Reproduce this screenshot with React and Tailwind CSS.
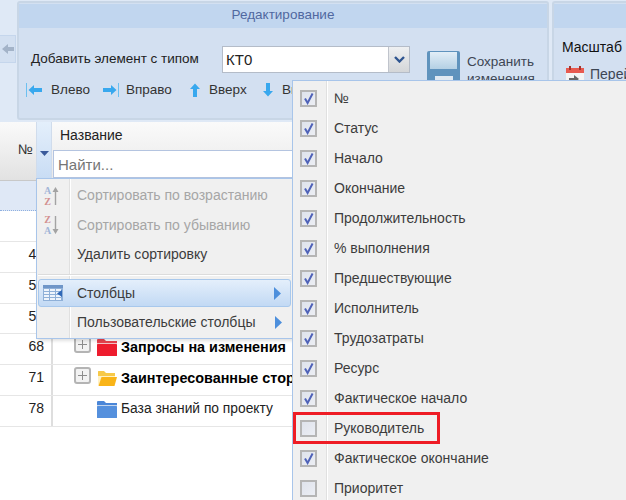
import React from 'react';

const rows = [
    { num: '1', selected: true, h: 'h-[30px]' },
    { num: '2', h: 'h-[31px]' },
    { num: '43', h: 'h-[31px]' },
    { num: '52', h: 'h-[31px]' },
    { num: '59', h: 'h-[30px]' },
    { num: '68', h: 'h-[31px]', title: 'Запросы на изменения', bold: true, folder: 'red', plus: true },
    { num: '71', h: 'h-[31px]', title: 'Заинтересованные стороны', bold: true, folder: 'yellow', plus: true },
    { num: '78', h: 'h-[31px]', title: 'База знаний по проекту', folder: 'blue' },
];

const columns = [
    ['№', true],
    ['Статус', true],
    ['Начало', true],
    ['Окончание', true],
    ['Продолжительность', true],
    ['% выполнения', true],
    ['Предшествующие', true],
    ['Исполнитель', true],
    ['Трудозатраты', true],
    ['Ресурс', true],
    ['Фактическое начало', true],
    ['Руководитель', false],
    ['Фактическое окончание', true],
    ['Приоритет', false],
];

const Folder = ({ type }) => {
    if (type === 'yellow') {
        return (
            <svg width="20" height="17" viewBox="0 0 20 17" className="shrink-0">
                <path d="M1 3 L1 1.5 Q1 1 1.5 1 L7 1 L9 3 L18 3 L18 6 L3 6 L1 12 Z" fill="#f7c948" />
                <path d="M1 6 L18 6 L18 7 L5 7 L2 15 L1 15 Z" fill="#fff1c4" />
                <path d="M4.5 7 L20 7 L17.5 16 L1.5 16 Z" fill="#f9b418" />
            </svg>
        );
    }
    const c = type === 'red' ? '#ee1c2e' : '#5590dd';
    const top = type === 'red' ? '#e8424e' : '#4a86d8';
    return (
        <svg width="20" height="17" viewBox="0 0 20 17" className="shrink-0">
            <path d="M0 3 L0 1 Q0 0 1 0 L7 0 L9 2 L20 2 L20 5 L0 5 Z" fill={top} />
            <rect x="0" y="4" width="20" height="1" fill="#f7f7f7" opacity="0.7" />
            <rect x="0" y="5" width="20" height="12" rx="0.5" fill={c} />
        </svg>
    );
};

const PlusBox = () => (
    <div className="w-[17px] h-[17px] shrink-0 rounded-[3px] border-2 border-[#b4b4b4] bg-[#f2f2f2] flex items-center justify-center">
        <svg width="11" height="11" viewBox="0 0 11 11">
            <path d="M5.5 1 V10 M1 5.5 H10" stroke="#8c8c8c" strokeWidth="1" />
        </svg>
    </div>
);

const Check = ({ checked }) => (
    <div className="w-[17px] h-[17px] shrink-0 border-2 border-[#b5b5b5] bg-gradient-to-br from-[#dfe3ec] to-[#eceef4] flex items-center justify-center">
        {checked && (
            <svg width="13" height="13" viewBox="0 0 13 13">
                <path d="M3 6.5 L5.6 11 L10.6 1.5" fill="none" stroke="#4f62b8" strokeWidth="2" />
            </svg>
        )}
    </div>
);

const Arrow = ({ dir, bar }) => {
    const rot = { left: 0, right: 180, up: 90, down: 270 }[dir];
    return (
        <svg width="18" height="18" viewBox="0 0 18 18" className="shrink-0">
            <g transform={`rotate(${rot} 9 9)`}>
                <path d="M2.5 9 L8 4 V7 H16 V11 H8 V14 Z" fill="#38a8ee" />
            </g>
            {bar === 'left' && <rect x="0" y="2" width="1" height="14" fill="#6cc0f0" />}
            {bar === 'right' && <rect x="17" y="2" width="1" height="14" fill="#6cc0f0" />}
        </svg>
    );
};

const SortIcon = ({ top, bottom, up }) => (
    <div className="w-[20px] h-[22px] flex items-center gap-[1px] opacity-60">
        <div className="flex flex-col items-center text-[10px] leading-[11px] font-bold font-['Liberation_Serif',serif]">
            <span className={top === 'A' ? 'text-[#6f8fc8]' : 'text-[#c05050]'}>{top}</span>
            <span className={bottom === 'A' ? 'text-[#6f8fc8]' : 'text-[#c05050]'}>{bottom}</span>
        </div>
        <svg width="7" height="20" viewBox="0 0 7 20">
            <g transform={up ? '' : 'rotate(180 3.5 10)'}>
                <path d="M3.5 1 L6.5 6 H4.2 V19 H2.8 V6 H0.5 Z" fill="#707070" />
            </g>
        </svg>
    </div>
);

const ColumnsIcon = () => (
    <svg width="20" height="16" viewBox="0 0 20 16">
        <rect x="0" y="0" width="20" height="16" fill="#8fb0d8" />
        <rect x="0" y="0" width="20" height="3" fill="#6f96c8" />
        {[1, 7, 13].map((x) =>
            [4, 7, 10, 13].map((y) => <rect key={`${x}-${y}`} x={x} y={y} width="5" height="2" fill="#eef4fc" />)
        )}
        <path d="M19 5 L14 8.5 L19 12 Z" fill="#2f68b8" />
    </svg>
);

const TriRight = () => (
    <svg width="7" height="13" viewBox="0 0 7 13" className="shrink-0">
        <path d="M0 0 L7 6.5 L0 13 Z" fill="#4d8fdc" />
    </svg>
);

const SortMenu = () => (
    <div className="absolute left-[36px] top-[178px] w-[257px] h-[161px] bg-[#f0f0f0] border border-[#a8c5ea] shadow-[2px_2px_3px_rgba(0,0,0,0.12)] text-[14px] text-[#3c3c3c] flex flex-col px-[1px] pt-[2px]">
        <div className="absolute left-[32px] top-0 bottom-0 w-[2px] border-l border-[#e0e0e0] bg-white" />
        <div className="relative flex items-center h-[30px]">
            <div className="w-[39px] pl-[6px]"><SortIcon top="A" bottom="Z" up /></div>
            <span className="text-[#a6a6a6]">Сортировать по возрастанию</span>
        </div>
        <div className="relative flex items-center h-[30px]">
            <div className="w-[39px] pl-[6px]"><SortIcon top="Z" bottom="A" /></div>
            <span className="text-[#a6a6a6]">Сортировать по убыванию</span>
        </div>
        <div className="relative flex items-center h-[30px]">
            <div className="w-[39px]" />
            <span>Удалить сортировку</span>
        </div>
        <div className="relative h-[2px] mt-[4px] mb-[3px] border-t border-[#dcdcdc] bg-white" />
        <div className="relative flex items-center h-[29px] rounded-[3px] border border-[#a8c8ec] bg-gradient-to-b from-[#e4effb] to-[#c2d9f4]">
            <div className="w-[38px] pl-[4px] flex"><ColumnsIcon /></div>
            <span className="flex-1">Столбцы</span>
            <div className="pr-[9px] flex"><TriRight /></div>
        </div>
        <div className="relative flex items-center h-[31px]">
            <div className="w-[39px]" />
            <span className="flex-1">Пользовательские столбцы</span>
            <div className="pr-[9px] flex"><TriRight /></div>
        </div>
    </div>
);

const ColumnsMenu = () => (
    <div className="absolute left-[292px] top-[80px] w-[334px] h-[420px] bg-[#f0f0f0] border-l border-t border-[#a8c5ea] text-[14px] text-[#3c3c3c] pt-[2px]">
        <div className="absolute left-[33px] top-0 bottom-0 w-[2px] border-l border-[#e0e0e0] bg-white" />
        {columns.map(([label, checked]) => (
            <div key={label} className="relative flex items-center h-[30px] pl-[7px]">
                <Check checked={checked} />
                <span className="ml-[17px]">{label}</span>
            </div>
        ))}
        <div className="absolute left-[0px] top-[331px] w-[147px] h-[32px] border-[3px] border-[#ee1c25]" />
    </div>
);

export default function App() {
    return (
        <div className="relative w-[626px] h-[500px] overflow-hidden bg-white font-['Liberation_Sans',sans-serif] text-[14px] text-[#222]">
            {/* ribbon */}
            <div className="flex h-[122px] bg-[#dfe9f6] pt-[1px]">
                <div className="w-[17px] pt-[34px] shrink-0">
                    <div className="w-[16px] h-[28px] bg-[#d3e0f1] border border-[#c5d6ec] border-l-0 flex items-center justify-center">
                        <svg width="12" height="12" viewBox="0 0 12 12">
                            <path d="M0 6 L6 1 V4 H12 V8 H6 V11 Z" fill="#a3b3c8" />
                        </svg>
                    </div>
                </div>
                <div className="w-[532px] h-[119px] shrink-0 border-2 border-[#c8d6e6] rounded-[3px] bg-[#d3e0f1] flex flex-col text-[13.5px]">
                    <div className="h-[24px] mt-[1px] bg-[#c1d6ef] text-center text-[#5068a0] leading-[22px]">Редактирование</div>
                    <div className="flex pl-[12px] pt-[18px]">
                        <div className="flex items-center h-[27px] w-[191px]">Добавить элемент с типом</div>
                        <div className="flex h-[27px] w-[188px] border border-[#b4bcc8] bg-white">
                            <div className="flex-1 pl-[3px] text-[15px] leading-[25px]">КТ0</div>
                            <div className="w-[21px] bg-gradient-to-b from-[#eef0f2] to-[#d4d6d8] border-l border-[#c0c4cc] flex items-center justify-center">
                                <svg width="11" height="7" viewBox="0 0 11 7">
                                    <path d="M1 1 L5.5 5.5 L10 1" fill="none" stroke="#2f5590" strokeWidth="2.4" />
                                </svg>
                            </div>
                        </div>
                        <div className="ml-[17px] mt-[5px] w-[33px] h-[40px] shrink-0 rounded-[2px] bg-[#5f93bd] flex flex-col items-center">
                            <div className="w-[27px] h-[17px] mt-[1px] bg-gradient-to-b from-[#e2eef7] to-[#b4d0e4]" />
                            <div className="w-[18px] h-[14px] mt-[7px] bg-[#dfe9f2]" />
                        </div>
                        <div className="ml-[7px] mt-[7px] leading-[17px] text-[#3d4654]">Сохранить<br />изменения</div>
                    </div>
                    <div className="flex items-center h-[20px] mt-[-11px] pl-[7px] text-[#333] relative">
                        <Arrow dir="left" bar="left" />
                        <span className="ml-[7px] w-[50px]">Влево</span>
                        <Arrow dir="right" bar="right" />
                        <span className="ml-[7px] w-[60px]">Вправо</span>
                        <Arrow dir="up" />
                        <span className="ml-[5px] w-[50px]">Вверх</span>
                        <Arrow dir="down" />
                        <span className="ml-[5px]">Вниз</span>
                    </div>
                </div>
                <div className="w-[74px] h-[119px] ml-[3px] shrink-0 border-2 border-r-0 border-[#c8d6e6] rounded-l-[3px] bg-[#d3e0f1] flex flex-col">
                    <div className="h-[24px] mt-[1px] bg-[#c1d6ef]" />
                    <div className="pl-[8px] pt-[9px] text-[#111] whitespace-nowrap">Масштаб</div>
                    <div className="flex items-center pl-[12px] pt-[6px] whitespace-nowrap text-[#3d4654] overflow-hidden">
                        <svg width="18" height="18" viewBox="0 0 18 18" className="shrink-0">
                            <rect x="0" y="2" width="18" height="16" fill="#f4f4f4" />
                            <rect x="0" y="2" width="18" height="5" fill="#e85a50" />
                            <rect x="3" y="0" width="2" height="4" fill="#a8342c" />
                            <rect x="13" y="0" width="2" height="4" fill="#a8342c" />
                            <path d="M3 12 H8 V9 L13 13 L8 17 V14 H3 Z" fill="#666" />
                        </svg>
                        <span className="ml-[6px]">Перейти</span>
                    </div>
                </div>
            </div>

            {/* grid header */}
            <div className="flex h-[59px] border-b border-[#c8c8c8]">
                <div className="w-[36px] shrink-0 bg-gradient-to-b from-[#fafafa] to-[#e2e2e2] flex items-center justify-end pr-[3px] pb-[4px] text-[#333]">№</div>
                <div className="w-[16px] shrink-0 bg-gradient-to-b from-[#e4effb] to-[#c8dcf4] border-x border-[#d0dcec] flex items-center justify-center pt-[4px]">
                    <svg width="9" height="5" viewBox="0 0 9 5"><path d="M0 0 H9 L4.5 5 Z" fill="#3a5a9a" /></svg>
                </div>
                <div className="flex-1 flex flex-col bg-gradient-to-b from-[#fafafa] to-[#e8e8e8]">
                    <div className="h-[28px] pl-[8px] leading-[27px] text-[#222]">Название</div>
                    <input
                        readOnly
                        placeholder="Найти..."
                        className="h-[28px] mx-[1px] pl-[4px] bg-white border border-[#b4c4e0] text-[15px] placeholder:text-[#757575] outline-none"
                    />
                </div>
            </div>

            {/* grid rows */}
            {rows.map((r) => (
                <div
                    key={r.num}
                    className={`flex ${r.h} border-b ${r.selected ? 'bg-[#dfe8f6] border-dotted border-[#8fb0e0]' : 'border-[#e6e6e6]'}`}
                >
                    <div className="w-[53px] shrink-0 border-r-2 border-[#dedede] pr-[7px] pt-[3px] text-right leading-[18px]">{r.num}</div>
                    <div className="flex-1 flex items-start pt-[2px] overflow-hidden whitespace-nowrap">
                        <div className="w-[23px] ml-[21px] shrink-0 flex">{r.plus && <PlusBox />}</div>
                        {r.folder && <div className="flex pt-[3px]"><Folder type={r.folder} /></div>}
                        {r.title && (
                            <span className={`ml-[4px] pt-[2px] leading-[18px] ${r.bold ? 'font-bold text-[14.4px] text-black' : 'text-[13.8px] text-[#222]'}`}>
                                {r.title}
                            </span>
                        )}
                    </div>
                </div>
            ))}

            <SortMenu />
            <ColumnsMenu />
        </div>
    );
}
